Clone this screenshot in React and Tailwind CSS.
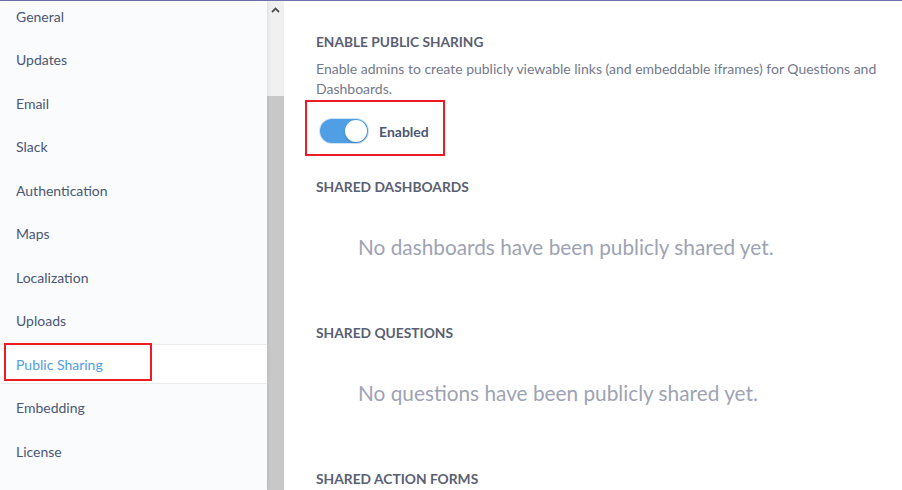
import React from "react";

const items = [
  "General",
  "Updates",
  "Email",
  "Slack",
  "Authentication",
  "Maps",
  "Localization",
  "Uploads",
  "Public Sharing",
  "Embedding",
  "License",
];

export default function App() {
  return (
    <div
      className="w-[902px] h-[490px] overflow-hidden bg-white flex flex-col"
      style={{ fontFamily: "Lato, 'Noto Sans', sans-serif" }}
    >
      <div className="h-[1px] bg-[#7172ad] shrink-0" />
      <div className="flex flex-1 min-h-0">
        {/* Sidebar */}
        <div className="w-[267px] shrink-0 bg-[#f9fbfc] shadow-[1px_0_3px_rgba(0,0,0,0.08)] relative z-10 overflow-hidden">
          <div className="flex flex-col gap-[3.5px] mt-[-5px]">
            {items.map((it) => {
              const active = it === "Public Sharing";
              return (
                <div
                  key={it}
                  className={
                    active
                      ? "relative h-10 shrink-0 flex items-center pl-4 bg-white border-y border-[#ececef] text-[#509ee3] text-[14px]"
                      : "relative h-10 shrink-0 flex items-center pl-4 text-[#4c5773] text-[14px]"
                  }
                >
                  {it}
                  {active && (
                    <div className="absolute left-[4px] top-[-2px] w-[148px] h-[38px] border-2 border-[#ed1c24]" />
                  )}
                </div>
              );
            })}
          </div>
        </div>
        {/* Scrollbar */}
        <div className="w-[17px] shrink-0 bg-[#f0f0f0] flex flex-col">
          <div className="h-[18px] flex items-center justify-center">
            <svg width="9" height="6" viewBox="0 0 9 6">
              <path d="M1 5 L4.5 1.5 L8 5" stroke="#505050" strokeWidth="1.8" fill="none" />
            </svg>
          </div>
          <div className="mt-[77px] flex-1 bg-[#c8c8c8]" />
        </div>
        {/* Content */}
        <div className="flex-1 pl-8 pr-6">
          <div className="mt-[31px] text-[13.7px] font-bold text-[#5a6072] leading-5">
            ENABLE PUBLIC SHARING
          </div>
          <div className="mt-[7px] text-[14px] text-[#74798a] leading-5">
            Enable admins to create publicly viewable links (and embeddable iframes) for Questions and Dashboards.
          </div>
          <div className="relative mt-[20px] flex items-center h-6 pl-1">
            <div className="w-[48px] h-6 rounded-full bg-[#509ee3] flex items-center justify-end pr-[1px] shadow-[0_0_0_1px_#cfe3f7]">
              <div className="w-[22px] h-[22px] rounded-full bg-white shadow-[0_1px_2px_rgba(0,0,0,0.2)]" />
            </div>
            <span className="ml-[11px] text-[14px] font-bold text-[#4c5773]">Enabled</span>
            <div className="absolute left-[-11px] top-[-19px] w-[140px] h-[56px] border-2 border-[#ed1c24]" />
          </div>
          <div className="mt-[34px] text-[13.8px] font-bold text-[#5a6072] leading-5">SHARED DASHBOARDS</div>
          <div className="mt-[38px] ml-[42px] text-[20.8px] text-[#9ea3b4] leading-6">
            No dashboards have been publicly shared yet.
          </div>
          <div className="mt-[64px] text-[13.8px] font-bold text-[#5a6072] leading-5">SHARED QUESTIONS</div>
          <div className="mt-[38px] ml-[42px] text-[20.8px] text-[#9ea3b4] leading-6">
            No questions have been publicly shared yet.
          </div>
          <div className="mt-[64px] text-[13.8px] font-bold text-[#5a6072] leading-5">SHARED ACTION FORMS</div>
        </div>
      </div>
    </div>
  );
}
